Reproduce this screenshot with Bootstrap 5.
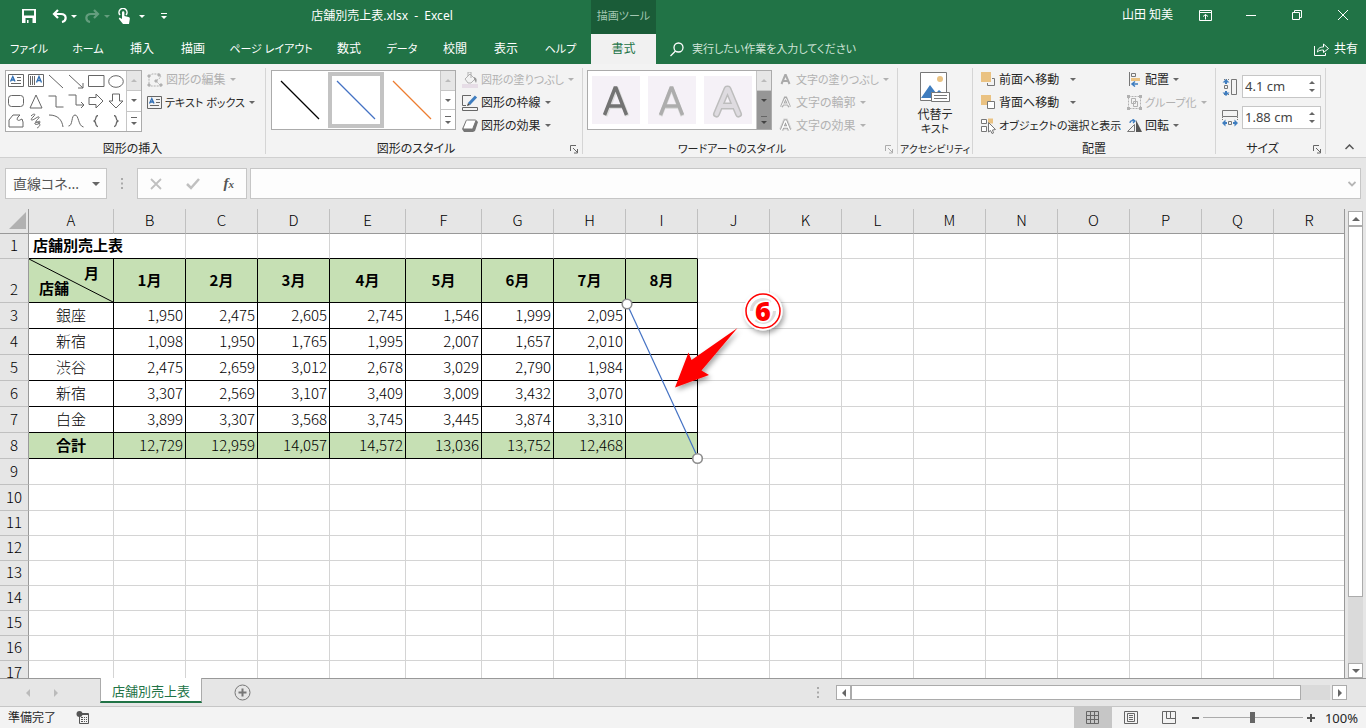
<!DOCTYPE html>
<html lang="ja">
<head>
<meta charset="utf-8">
<meta name="viewport" content="width=device-width, initial-scale=1">
<title>店舗別売上表.xlsx - Excel</title>
<link href="https://cdn.jsdelivr.net/npm/bootstrap@5.3.0/dist/css/bootstrap.min.css" rel="stylesheet">
<style>
:root{--xl:#217346;--line:#d4d4d4;--edge:#999;--chrome:#e6e6e6;--pane:#f3f3f3}
body{font-family:"Noto Sans","Noto Sans CJK JP",sans-serif;font-size:12px;line-height:16px;color:#262626;background:var(--chrome);font-feature-settings:"palt"}
button,input{font:inherit;font-feature-settings:inherit;color:inherit}
button{background:none;border:0;padding:0}
svg{display:block;flex:none}
svg.ic{fill:none;stroke:#666;stroke-width:1}
.kana{font-size:11px}
.kana-s{font-size:10px}
.tri{display:inline-block;width:0;height:0;border:3px solid transparent;border-top-color:#666;border-bottom:0;flex:none}
.tri.up{border:3px solid transparent;border-bottom-color:#666;border-top:0}
.tri.lt{border:4px solid transparent;border-right-color:#666;border-left:0}
.tri.rt{border:4px solid transparent;border-left-color:#666;border-right:0}
.tri.big{border-width:4px 4px 0}
.tri.up.big{border-width:0 4px 4px}
/* title and tabs */
.titlebar{height:34px;background:var(--xl);color:#fff}
.left-part{width:591px;height:32px}
.quick{width:173px;padding-left:22px}
.quick .tri{border-top-color:#fff;border-width:3px 3px 0}
.quick .faded{opacity:.3}
.tooltab{width:65px;background:#1a5c38;color:#a3c7b2;padding-bottom:2px}
.winbtns{height:30px}
.winbtn{width:46px;height:30px}
.winbtn svg{stroke:#fff}
.user{margin-right:9px}
.menu{height:30px;background:var(--xl);color:#fff}
.tabgrid{display:grid;grid-template-columns:58px 60px 48px 54px 102px 54px 52px 54px 48px 61px 65px}
.tabgrid a{color:#fff;text-decoration:none;line-height:30px;text-align:center;white-space:nowrap}
.tabgrid a.on{background:#f1f1f1;color:var(--xl)}
.askbox{margin-left:14px}
.ask{background:none;border:0;outline:0;width:220px;padding:0;color:#fff}
.ask::placeholder{color:#cfe3d7;opacity:1}
/* ribbon */
.ribbon{background:var(--pane);border-bottom:1px solid #d0d0d0;padding:4px 0 3px}
.grp{height:86px;border-right:1px solid #d5d5d5;display:flex;flex-direction:column;flex:none}
.grp-body{flex:1;display:flex;min-height:0}
.grp-label{height:12px;line-height:14px;text-align:center;position:relative;white-space:nowrap}
.launch{position:absolute;right:4px;top:3px}
.g1{width:266px}.g2{width:317px}.g3{width:315px}.g4{width:75px}.g5{width:243px}.g6{width:110px}
.gal{display:flex;margin:2px 6px 0 5px;background:#fff;border:1px solid #ababab;height:60px}
.gal.tall{height:62px;margin-right:5px}
.g3 .gal{margin-left:4px}
.shapes{display:grid;grid-template-columns:repeat(6,20px);grid-auto-rows:20px;width:120px}
.shapes button{display:grid;place-items:center}
.galbar{width:15px;display:flex;flex-direction:column;border-left:1px solid #c6c6c6}
.galbar button{flex:1;display:grid;place-items:center;border-bottom:1px solid #c6c6c6}
.galbar button:last-child{border:0}
.galbar button:first-child{background:#e6e6e6}
.galbar button:first-child .tri{border-bottom-color:#bbb}
.galbar.dark button+button{background:#969696;border:0}
.galbar.dark .tri{border-top-color:#444}
.more{border-top:1px solid #666;padding-top:3px;line-height:0}
.tile{width:56px;height:56px;display:grid;place-items:center;margin-top:1px}
.tile.sel{border:4px solid #c3c3c3}
.wa{width:48px;height:48px;background:#f5f1f7;margin:5px 4px}
.cmds{display:flex;flex-direction:column}
.cmds.wide{width:146px}
.cmds button{height:23px;display:flex;align-items:center;white-space:nowrap;gap:3px}
.cmds button .tri{margin-left:1px}
.off{color:#b1b1b1}
.off .tri{border-top-color:#b1b1b1}
.sizes{padding:7px 0 0 6px}
.spin{width:79px;height:23px;background:#fff;border:1px solid #c6c6c6;display:flex}
.spin input{border:0;outline:0;background:none;width:60px;padding:0 0 2px 2px;color:#444;font-size:13px}
.spin div{flex:1;display:grid;place-items:center;padding:2px 0}
.spin button{line-height:0;display:flex}
/* formula bar */
.fbar{padding:10px 5px}
.box31{height:31px;border:1px solid #c6c6c6;background:#fdfdfd;display:flex;align-items:center}
.namebox{width:102px}
.namebox input{border:0;outline:0;background:none;width:86px;padding:0 0 0 7px;font-size:14px;color:#555}
.grip{margin-left:14px}
.fbtns{width:110px;margin-left:13px;margin-right:3px;justify-content:space-around}
.fxbtn{font:italic bold 15px "Liberation Serif",serif;color:#555}
.fxbtn span{font-size:11px}
.fx-input{border:0;outline:0;background:none;flex:1;min-width:0}
/* sheet */
.work{min-height:0}
.sheetpane{overflow:hidden;border-right:1px solid var(--edge);background:#fff;font-feature-settings:normal}
.sheet{table-layout:fixed;border-collapse:separate;border-spacing:0;width:100%;font-size:15px;line-height:20px;color:#000;font-family:"Noto Sans CJK JP",sans-serif}
.sheet th,.sheet td{padding:0 2px 2px;height:25px;border:solid var(--line);border-width:0 1px 1px 0;white-space:nowrap}
.sheet thead th{background:var(--chrome);font-weight:300;text-align:center;border-right-color:#c0c0c0;border-bottom-color:var(--edge)}
.sheet thead th:first-child,.sheet tbody th:first-child{border-right-color:var(--edge)}
.sheet thead th:last-child,.sheet tbody td:last-child{border-right:0}
.sheet tbody th:first-child{background:var(--chrome);font-weight:300;text-align:center;vertical-align:bottom;border-bottom-color:#c0c0c0;padding:0 0 3px}
.sheet .h26>*{height:26px}
.sheet .h44>*{height:44px}
.sheet td.k{border-color:#000}
.sheet td.kb{border-bottom-color:#000}
.sheet .hd{background:#c6e0b4;font-weight:700;text-align:center}
.sheet .sum{background:#c6e0b4}
.sheet .n{text-align:right;font-weight:300}
.sheet .c{text-align:center;font-weight:300}
.diag{position:relative;line-height:15px}
.diag svg{position:absolute;inset:0;width:100%;height:100%}
.diag span{display:block;position:relative}
.anchor{position:relative}
.drawing{position:absolute;left:0;top:0;overflow:visible;z-index:2}
.vbar{width:21px;padding:2px 3px 0}
.sbtn{width:15px;height:15px;background:#fff;border:1px solid #ababab;display:grid;place-items:center;flex:none}
.track{background:#dadada;flex:1;display:flex;min-height:0}
.thumb{background:#fff;border:1px solid #ababab}
.vbar .thumb{width:100%;height:85%}
/* sheet tabs */
.sheetbar{height:29px;border-top:1px solid var(--edge);border-bottom:1px solid #c6c6c6}
.navs{width:100px;padding-left:26px;gap:24px}
.navs .tri.lt{border-right-color:#bbb}.navs .tri.rt{border-left-color:#bbb}
.stab{width:102px;height:25px;margin-top:-1px;background:#fff;border:1px solid #ababab;border-top:0;border-bottom:2px solid var(--xl);color:var(--xl);text-align:center;line-height:26px;font-size:13px;text-decoration:none}
.hbar{width:511px;padding-top:6px;margin-right:19px}
.hbar .track{height:15px;margin-right:2px}
.hbar .thumb{width:94%}
.status{height:21px;background:var(--pane)}
.vbtn{width:38px;height:21px;display:grid;place-items:center}
.vbtn.on{background:#c6c6c6}
.pct{font-size:13px;padding:0 8px 0 10px}
.zoomer{appearance:none;-webkit-appearance:none;width:100px;height:13px;background:linear-gradient(#ababab,#ababab) center/100% 1px no-repeat;margin:0 4px}
.zoomer::-webkit-slider-thumb{-webkit-appearance:none;width:5px;height:11px;background:#666}
</style>
</head>
<body class="vh-100 d-flex flex-column overflow-hidden">
<header>
<div class="titlebar d-flex">
 <div class="left-part d-flex align-items-center">
  <div class="quick d-flex align-items-center">
   <button aria-label="上書き保存"><svg width="14" height="14" fill="#fff"><path fill-rule="evenodd" d="M0 0h14v14H0zM2 1.500v5h10v-5zM3.500 9v5h1.500v-3h1.500v3h4V9z"/></svg></button>
   <button class="ms-3" aria-label="元に戻す"><svg width="15" height="14" fill="none" stroke="#fff" stroke-width="2.200"><path d="M6 1 2 5l4 4M2 5h7c6 0 6 7 1 8"/></svg></button>
   <i class="tri ms-1"></i>
   <button class="faded ms-2" aria-label="やり直し"><svg width="15" height="14" fill="none" stroke="#fff" stroke-width="2.200"><path d="M9 1l4 4-4 4M13 5H6C0 5 0 12 5 13"/></svg></button>
   <i class="tri faded ms-1"></i>
   <button class="ms-2" aria-label="タッチ/マウス モードの切り替え"><svg width="13" height="16"><path d="M2 7a4 4 0 1 1 6 0" fill="none" stroke="#fff" stroke-width="1.500"/><path fill="#fff" d="M4 4.500a1.200 1.200 0 0 1 2.400 0V8l4 1c1.200.3 1.600 1 1.400 2l-.8 5H5L1 11c-.5-1 .5-1.700 1.400-1L4 11z"/></svg></button>
   <i class="tri ms-2"></i>
   <button class="ms-3" aria-label="クイック アクセス ツール バーのユーザー設定"><svg width="7" height="7" fill="#fff"><path d="M0 0h6v1H0zM0 3h6L3 6z"/></svg></button>
  </div>
  <div class="flex-fill text-center text-nowrap">店舗別売上表.xlsx&nbsp; -&nbsp; Excel</div>
 </div>
 <div class="tooltab d-flex align-items-center justify-content-center text-nowrap kana">描画ツール</div>
 <div class="winbtns ms-auto d-flex align-items-center">
  <span class="user">山田 知美</span>
  <button class="winbtn" aria-label="リボンの表示オプション"><svg class="m-auto" width="13" height="11" fill="none"><path d="M.5.500h12v10H.5zM.5 2.500h12M6.500 9.500V4.500M4 6.500l2.500-2 2.500 2"/></svg></button>
  <button class="winbtn" aria-label="最小化"><svg class="m-auto" width="10" height="10"><path d="M0 5.500h10"/></svg></button>
  <button class="winbtn" aria-label="元に戻す(縮小)"><svg class="m-auto" width="10" height="10" fill="none"><path d="M.5 2.500h7v7h-7zM2.500 2V.5h7v7H8"/></svg></button>
  <button class="winbtn" aria-label="閉じる"><svg class="m-auto" width="10" height="10"><path d="m0 0 10 10M10 0 0 10"/></svg></button>
 </div>
</div>
<div class="menu d-flex align-items-stretch">
 <nav class="tabgrid">
  <a href="#" class="kana">ファイル</a><a href="#" class="kana">ホーム</a><a href="#">挿入</a><a href="#">描画</a><a href="#" class="kana">ページ レイアウト</a><a href="#">数式</a><a href="#" class="kana">データ</a><a href="#">校閲</a><a href="#">表示</a><a href="#" class="kana">ヘルプ</a><a href="#" class="on">書式</a>
 </nav>
 <label class="askbox d-flex align-items-center gap-2">
  <svg width="14" height="15" fill="none" stroke="#fff" stroke-width="1.300"><circle cx="8.500" cy="5.500" r="4.500"/><path d="M5.500 9 .5 14"/></svg>
  <input class="ask kana" aria-label="操作アシスト" placeholder="実行したい作業を入力してください">
 </label>
 <button class="ms-auto d-flex align-items-center gap-1 pe-2"><svg width="17" height="15" fill="none" stroke="#fff"><path d="M1.500 4v9.500h11V11M4.500 10c0-4 3-5 6-5V2l5 4.500-5 4V8c-3 0-4.500.5-6 2z"/></svg><span>共有</span></button>
</div>
</header>

<section class="ribbon d-flex" aria-label="書式">
 <div class="grp g1"><div class="grp-body">
  <div class="gal tall">
   <div class="shapes">
    <button aria-label="テキスト ボックス"><svg class="ic" width="16" height="14"><path d="M.5.500h15v12H.5zM9 3.500h4M9 6.500h4M3 9.500h10"/><path stroke="#2e6db4" stroke-width="1.300" d="m2.500 7.500 2.300-5 2.200 5M3.500 6h3"/></svg></button>
    <button aria-label="縦書き"><svg class="ic" width="16" height="14"><path d="M.5.500h15v12H.5zM2.500 2v9M4.500 2v9M6.500 2v9"/><path stroke="#2e6db4" stroke-width="1.300" d="m8.500 8.500 2.500-6 2.500 6M9.500 6.500h3"/></svg></button>
    <button aria-label="直線"><svg class="ic" width="16" height="16"><path d="m1 2 14 13"/></svg></button>
    <button aria-label="矢印"><svg class="ic" width="16" height="16"><path d="m1 2 14 13M15 10v5h-5"/></svg></button>
    <button aria-label="四角形"><svg class="ic" width="17" height="13"><path d="M.5.500h15.500v11H.5z"/></svg></button>
    <button aria-label="楕円"><svg class="ic" width="16" height="13"><ellipse cx="8" cy="6.500" rx="7.300" ry="5.800"/></svg></button>
    <button aria-label="角丸四角形"><svg class="ic" width="16" height="13"><rect x=".5" y=".5" width="15" height="11" rx="3"/></svg></button>
    <button aria-label="三角形"><svg class="ic" width="14" height="15"><path d="m7 1 6 13H1z"/></svg></button>
    <button aria-label="コネクタ"><svg class="ic" width="16" height="13"><path d="M.5 1H8v11h7.500"/></svg></button>
    <button aria-label="矢印コネクタ"><svg class="ic" width="17" height="15"><path d="M.5 1H8v10h7.500M13 8l3 3-3 3"/></svg></button>
    <button aria-label="右矢印"><svg class="ic" width="16" height="16"><path d="M1 4.500h7V1l7 7-7 7v-3.500H1z"/></svg></button>
    <button aria-label="下矢印"><svg class="ic" width="16" height="16"><path d="M4.500 1v7H1l7 7 7-7h-3.500V1z"/></svg></button>
    <button aria-label="フリーフォーム"><svg class="ic" width="16" height="14"><path d="M1 13V6l4-5h7l-2 2c-2 3 0 4 2 3l2-1 1 3v5z"/></svg></button>
    <button aria-label="曲線"><svg class="ic" width="14" height="16"><path d="M2 3c3-3 5-2 3 0s-4 4-2 4 6-4 7-3-4 4-3 5 4-2 4 0-4 3-5 2 2-3 4-1 0 4-2 5"/></svg></button>
    <button aria-label="円弧"><svg class="ic" width="16" height="14"><path d="M1 1c9 0 13 5 14 12"/></svg></button>
    <button aria-label="自由曲線"><svg class="ic" width="16" height="14"><path d="M.5 12C5 12 3 1 7 1s3 11 8.500 12"/></svg></button>
    <button aria-label="左中かっこ"><svg class="ic" width="8" height="13"><path d="M6 .5C2.500.5 5 6 1.500 6 5 6 2.500 11.500 6 11.500" stroke-width="1.300"/></svg></button>
    <button aria-label="右中かっこ"><svg class="ic" width="8" height="13"><path d="M2 .5c3.500 0 1 5.500 4.500 5.500C3 6 5.500 11.500 2 11.500" stroke-width="1.300"/></svg></button>
   </div>
   <div class="galbar"><button aria-label="上"><i class="tri up"></i></button><button aria-label="下"><i class="tri"></i></button><button aria-label="その他"><span class="more"><i class="tri"></i></span></button></div>
  </div>
  <div class="cmds">
   <button class="off"><svg class="ic" width="16" height="14" style="stroke:#b1b1b1"><path stroke-dasharray="2 1" d="M2 3 5 1h7l2 3-5 4 5 5H2z"/><path fill="#b1b1b1" d="M1 2h2v2H1zM11 1h2v2h-2zM1 11h2v2H1zM13 11h2v2h-2zM8 7h2v2H8z"/></svg>図形の編集<i class="tri"></i></button>
   <button class="kana"><svg class="ic" width="15" height="13"><path d="M.5.500h14v12H.5zM9 3.500h4M9 6.500h4M3 9.500h9"/><path stroke="#2e6db4" stroke-width="1.300" d="m2.500 7.500 2.300-5 2.200 5M3.500 6h3"/></svg>テキスト ボックス<i class="tri"></i></button>
  </div>
 </div><div class="grp-label">図形の挿入</div></div>

 <div class="grp g2"><div class="grp-body">
  <div class="gal">
   <button class="tile" aria-label="黒の線"><svg width="40" height="40"><path d="m1 1 38 38" stroke="#000" stroke-width="1.300"/></svg></button>
   <button class="tile sel" aria-label="青の線"><svg width="40" height="40"><path d="m1 1 38 38" stroke="#4472c4" stroke-width="1.300"/></svg></button>
   <button class="tile" aria-label="オレンジの線"><svg width="40" height="40"><path d="m1 1 38 38" stroke="#ed7d31" stroke-width="1.300"/></svg></button>
   <div class="galbar"><button aria-label="上"><i class="tri up"></i></button><button aria-label="下"><i class="tri"></i></button><button aria-label="その他"><span class="more"><i class="tri"></i></span></button></div>
  </div>
  <div class="cmds">
   <button class="off kana"><svg width="16" height="16"><path fill="#e6dde6" d="M0 12h16v4H0z"/><path d="m3 7 5-5 5 5-4 4H6zM6 4V0h3v6" fill="none" stroke="#b1b1b1"/><path d="M12 5c3 1 3 3 2 6l-2-4z" fill="#999"/></svg>図形の塗りつぶし<i class="tri"></i></button>
   <button><svg width="16" height="16" fill="none"><path d="M9 .5H.5v10H4M.5 12.500h15v3H.5z" stroke="#666"/><path d="m7 9 7-7.500" stroke="#3f7dbf" stroke-width="3"/><path d="m5 11 1-3 2 2z" fill="#444"/></svg>図形の枠線<i class="tri"></i></button>
   <button><svg width="16" height="16"><path d="M5 2h9l2 2-3 9-2 1H2l-2-3z" fill="#777"/><path d="M5.500 2H13c1 0 1 .5.800 1L11 10c-.3 1-.8 1-1.500 1H2.500c-1 0-1.500-.7-1.300-1.200L4 3c.2-.7.500-1 1.500-1z" fill="#fff" stroke="#777"/></svg>図形の効果<i class="tri"></i></button>
  </div>
 </div><div class="grp-label pe-3">図形のスタイル<button class="launch" aria-label="図形の書式設定"><svg class="ic" width="8" height="9"><path d="M.5 6V.5H6M3 3l4 4M7.500 4v4H4"/></svg></button></div></div>

 <div class="grp g3"><div class="grp-body">
  <div class="gal">
   <button class="wa" aria-label="塗りつぶし 濃い灰色"><svg width="48" height="48"><path d="m12.500 39 10.500-27h1L34.500 39M17 30h13.500" transform="translate(1 1)" fill="none" stroke="#ddd" stroke-width="4"/><path d="m12.500 39 10.500-27h1L34.500 39M17 30h13.500" fill="none" stroke="#737373" stroke-width="3.500"/></svg></button>
   <button class="wa ms-1" aria-label="塗りつぶし 灰色"><svg width="48" height="48"><path d="m12.500 39 10.500-27h1L34.500 39M17 30h13.500" transform="translate(0 1)" fill="none" stroke="#ddd" stroke-width="4"/><path d="m12.500 39 10.500-27h1L34.500 39M17 30h13.500" fill="none" stroke="#adadad" stroke-width="3.500"/></svg></button>
   <button class="wa ms-1" aria-label="塗りつぶし 白"><svg width="48" height="48" stroke-linejoin="round" stroke-linecap="round" fill="none"><path d="m12.500 38 10.500-25h1L34.500 38M17 30h13.500" stroke="#bdbdbd" stroke-width="7"/><path d="m12.500 38 10.500-25h1L34.500 38M17 30h13.500" stroke="#dedbe0" stroke-width="4"/></svg></button>
   <div class="galbar dark"><button aria-label="上"><i class="tri up"></i></button><button aria-label="下"><i class="tri"></i></button><button aria-label="その他"><span class="more"><i class="tri"></i></span></button></div>
  </div>
  <div class="cmds off">
   <button class="kana"><svg width="15" height="14" fill="none" stroke="#aaa" stroke-width="2"><path d="m3.500 11 3.700-9h.600l3.700 9M5 8h5"/></svg>文字の塗りつぶし<i class="tri"></i></button>
   <button><svg width="15" height="14" fill="none"><path d="m3.500 11 3.700-9h.600l3.700 9M5 8h5" stroke="#aaa" stroke-width="3"/><path d="m3.500 10.500 3.700-8h.600l3.700 8M5 8h5" stroke="#fff"/></svg>文字の輪郭<i class="tri"></i></button>
   <button><svg width="15" height="16" fill="none"><path d="m3.500 12 3.700-9h.600l3.700 9M5 9h5" stroke="#d6d6d6" stroke-width="5"/><path d="m3.500 12 3.700-9h.600l3.700 9M5 9h5" stroke="#999" stroke-width="3"/><path d="m3.500 12 3.700-9h.600l3.700 9M5 9h5" stroke="#fff" stroke-width="1.500"/></svg>文字の効果<i class="tri"></i></button>
  </div>
 </div><div class="grp-label kana pe-3">ワードアートのスタイル<button class="launch opacity-50" aria-label="文字の効果の設定"><svg class="ic" width="8" height="9"><path d="M.5 6V.5H6M3 3l4 4M7.500 4v4H4"/></svg></button></div></div>

 <div class="grp g4"><div class="grp-body justify-content-center">
  <button class="d-flex flex-column align-items-center lh-sm"><svg class="mt-1 mb-1" width="32" height="31"><path d="M1.500.500h26v28h-26z" fill="#fff" stroke="#777"/><circle cx="21" cy="7" r="3" fill="#eac282"/><path d="m2 26 9-13 6 8 3-3 8 7v1z" fill="#3f7dbf"/><path d="M12.500 20.500h18v9h-18z" fill="#fff" stroke="#777"/><path d="M15 23.500h13M15 26.500h13" stroke="#777"/></svg><span>代替テ</span><span class="kana">キスト</span></button>
 </div><div class="grp-label kana-s">アクセシビリティ</div></div>

 <div class="grp g5"><div class="grp-body ps-2">
  <div class="cmds wide">
   <button><svg width="15" height="15"><path d="M0 0h10v10H0z" fill="#eac282"/><path d="M11 6.500h2.500v7h-7V11" fill="none" stroke="#777"/></svg>前面へ移動<i class="tri ms-2"></i></button>
   <button><svg width="15" height="15"><path d="M0 0h10v10H0z" fill="#eac282"/><path d="M6.500 6.500h7v7h-7z" fill="#fff" stroke="#777"/></svg>背面へ移動<i class="tri ms-2"></i></button>
   <button class="kana"><svg width="15" height="16" fill="none" stroke="#777"><path d="M7 .500h5v5H7z" fill="#eac282" stroke="none"/><path d="M.5 1.500h5v4h-5zM.5 8.500h5v5h-5z" fill="#fff"/><path d="m7.500 4.500 7 7-3 .5 1 3-1.500.5-1.500-3-2 1.500z" fill="#fff"/></svg>オブジェクトの選択と表示</button>
  </div>
  <div class="cmds">
   <button><svg width="15" height="15" fill="none"><path d="M2.500 0v14" stroke="#777"/><path d="M4.500 1.500h4v3h-4z" stroke="#777"/><path d="M4 6h9v3H4z" fill="#eac282"/><path d="M11 12H5m3-2.500L5 12l3 2.500" stroke="#3f7dbf" stroke-width="1.500"/></svg>配置<i class="tri"></i></button>
   <button class="off kana"><svg width="15" height="15" fill="none" stroke="#b1b1b1"><path stroke-dasharray="2 1" d="M1.500 1.500h12v12h-12z"/><path d="M4.500 3.500h4v5h-4zM6.500 6.500h4v5h-4z"/><path fill="#b1b1b1" stroke="none" d="M0 0h3v3H0zM12 0h3v3h-3zM0 12h3v3H0zM12 12h3v3h-3z"/></svg>グループ化<i class="tri"></i></button>
   <button><svg width="15" height="14" fill="none"><path d="M.5 12.500h7v-7z" stroke="#777"/><path d="M9 1v12h6z" fill="#555"/><path d="M3 4c0-2 2-3 4-2M5.500 0 8 2 6 4" stroke="#3f7dbf" stroke-width="1.300"/></svg>回転<i class="tri"></i></button>
  </div>
 </div><div class="grp-label">配置</div></div>

 <div class="grp g6"><div class="grp-body sizes flex-column gap-2">
  <div class="d-flex align-items-center gap-1"><svg width="16" height="18" fill="none"><path d="M9.500 1.500h5v15h-5z" stroke="#777"/><path d="M2 1.500h6M2 16.500h6" stroke="#777" stroke-dasharray="1 1"/><path d="M2.500 7.500h3v3h-3z" stroke="#777"/><path d="M4 1 .5 4.500H3V6h2V4.500h2.500zM4 18 .5 14.500H3V13h2v1.500h2.500z" fill="#3f7dbf"/></svg><div class="spin"><input aria-label="図形の高さ" value="4.1 cm"><div><button aria-label="高さを増やす"><i class="tri up"></i></button><button aria-label="高さを減らす"><i class="tri"></i></button></div></div></div>
  <div class="d-flex align-items-center gap-1"><svg width="16" height="18" fill="none"><path d="M.5 1.500h15v6H.5z" stroke="#777"/><path d="M.5 8v4M15.500 8v4" stroke="#777" stroke-dasharray="1 1"/><path d="M6.500 12.500h3v3h-3z" stroke="#777"/><path d="m0 14 3.500-3.500V13H5v2H3.500v2.500zM16 14l-3.500-3.500V13H11v2h1.500v2.500z" fill="#3f7dbf"/></svg><div class="spin"><input aria-label="図形の幅" value="1.88 cm"><div><button aria-label="幅を増やす"><i class="tri up"></i></button><button aria-label="幅を減らす"><i class="tri"></i></button></div></div></div>
 </div><div class="grp-label pe-3">サイズ<button class="launch" aria-label="サイズとプロパティ"><svg class="ic" width="8" height="9"><path d="M.5 6V.5H6M3 3l4 4M7.500 4v4H4"/></svg></button></div></div>
 <button class="ms-auto align-self-end pe-2 me-1 pb-1" aria-label="リボンを折りたたむ"><svg width="9" height="6" fill="none" stroke="#555" stroke-width="1.500"><path d="m.5 5 4-4 4 4"/></svg></button>
</section>

<section class="fbar d-flex align-items-center">
 <div class="box31 namebox"><input aria-label="名前ボックス" value="直線コネ..."><button aria-label="名前の一覧"><i class="tri big d-block"></i></button></div>
 <svg class="grip" width="3" height="12" fill="#aaa"><path d="M0 0h2v2H0zM0 4.500h2v2H0zM0 9h2v2H0z"/></svg>
 <div class="box31 fbtns">
  <button aria-label="キャンセル"><svg width="12" height="12" stroke="#c0c0c0" stroke-width="1.800"><path d="m1 1 10 10M11 1 1 11"/></svg></button>
  <button aria-label="入力"><svg width="14" height="12" fill="none" stroke="#c0c0c0" stroke-width="2.500"><path d="m1 6 4 4 8-9"/></svg></button>
  <button class="fxbtn" aria-label="関数の挿入">f<span>x</span></button>
 </div>
 <div class="box31 flex-fill"><input class="fx-input" aria-label="数式バー"><svg class="me-1" width="8" height="6" fill="none" stroke="#b5b5b5" stroke-width="1.800"><path d="m.5 1 3.500 3.500L7.500 1"/></svg></div>
</section>

<main class="work d-flex flex-fill">
<div class="sheetpane flex-fill">
<table class="sheet">
<colgroup><col style="width:29px"><col style="width:85px"><col style="width:72px"><col style="width:72px"><col style="width:72px"><col style="width:76px"><col style="width:76px"><col style="width:72px"><col style="width:72px"><col style="width:72px"><col style="width:72px"><col style="width:72px"><col style="width:72px"><col style="width:72px"><col style="width:72px"><col style="width:72px"><col style="width:72px"><col style="width:72px"><col></colgroup>
<thead><tr><th aria-label="すべて選択"><svg class="ms-auto" width="17" height="17"><path d="M17 0v17H0z" fill="#b1b1b1"/></svg></th><th>A</th><th>B</th><th>C</th><th>D</th><th>E</th><th>F</th><th>G</th><th>H</th><th>I</th><th>J</th><th>K</th><th>L</th><th>M</th><th>N</th><th>O</th><th>P</th><th>Q</th><th>R</th></tr></thead>
<tbody>
<tr><th>1</th><td class="kb fw-bold ps-1" colspan="2">店舗別売上表</td><td class="kb"></td><td class="kb"></td><td class="kb"></td><td class="kb"></td><td class="kb"></td><td class="kb"></td><td class="kb"></td><td></td><td></td><td></td><td></td><td></td><td></td><td></td><td></td><td></td></tr>
<tr class="h44"><th>2</th><td class="k hd diag"><svg viewBox="0 0 84 43" preserveAspectRatio="none"><path d="m0 0 84 43" stroke="#000"/></svg><span class="text-end pe-2 me-1">月</span><span class="text-start ps-2">店舗</span></td><td class="k hd">1月</td><td class="k hd">2月</td><td class="k hd">3月</td><td class="k hd">4月</td><td class="k hd">5月</td><td class="k hd">6月</td><td class="k hd">7月</td><td class="k hd">8月</td><td></td><td></td><td></td><td></td><td></td><td></td><td></td><td></td><td></td></tr>
<tr class="h26"><th>3</th><td class="k c">銀座</td><td class="k n">1,950</td><td class="k n">2,475</td><td class="k n">2,605</td><td class="k n">2,745</td><td class="k n">1,546</td><td class="k n">1,999</td><td class="k n">2,095</td><td class="k anchor">
<svg class="drawing" width="160" height="160">
 <defs><filter id="sh" x="-30%" y="-30%" width="170%" height="170%"><feDropShadow dx="2" dy="3" stdDeviation="2.500" flood-opacity=".35"/></filter></defs>
 <path d="m1 1 71 154" stroke="#4472c4" stroke-width="1.200"/>
 <circle cx="1" cy="1" r="4.800" fill="#fff" stroke="#8c8c8c" stroke-width="1.600"/><circle cx="71.500" cy="155.500" r="4.800" fill="#fff" stroke="#8c8c8c" stroke-width="1.600"/>
 <path filter="url(#sh)" fill="#f00" d="m111.500 25-46 32-3-7.500-13.500 35 34-12.500-7.500-4.500z"/>
 <circle cx="137" cy="8" r="19.500" fill="#fff" filter="url(#sh)"/><circle cx="137" cy="8" r="17" fill="#fff" stroke="#f00" stroke-width="1.500"/>
 <circle cx="137" cy="8" r="11.500" fill="none" stroke="#ddd" stroke-width="3" stroke-dasharray="26 10"/>
 <text x="137" y="18" text-anchor="middle" font-family="Open Sans" font-weight="800" font-size="27" fill="#f00" stroke="#fff" stroke-width="3" paint-order="stroke">6</text>
</svg></td><td></td><td></td><td></td><td></td><td></td><td></td><td></td><td></td><td></td></tr>
<tr class="h26"><th>4</th><td class="k c">新宿</td><td class="k n">1,098</td><td class="k n">1,950</td><td class="k n">1,765</td><td class="k n">1,995</td><td class="k n">2,007</td><td class="k n">1,657</td><td class="k n">2,010</td><td class="k"></td><td></td><td></td><td></td><td></td><td></td><td></td><td></td><td></td><td></td></tr>
<tr class="h26"><th>5</th><td class="k c">渋谷</td><td class="k n">2,475</td><td class="k n">2,659</td><td class="k n">3,012</td><td class="k n">2,678</td><td class="k n">3,029</td><td class="k n">2,790</td><td class="k n">1,984</td><td class="k"></td><td></td><td></td><td></td><td></td><td></td><td></td><td></td><td></td><td></td></tr>
<tr class="h26"><th>6</th><td class="k c">新宿</td><td class="k n">3,307</td><td class="k n">2,569</td><td class="k n">3,107</td><td class="k n">3,409</td><td class="k n">3,009</td><td class="k n">3,432</td><td class="k n">3,070</td><td class="k"></td><td></td><td></td><td></td><td></td><td></td><td></td><td></td><td></td><td></td></tr>
<tr class="h26"><th>7</th><td class="k c">白金</td><td class="k n">3,899</td><td class="k n">3,307</td><td class="k n">3,568</td><td class="k n">3,745</td><td class="k n">3,445</td><td class="k n">3,874</td><td class="k n">3,310</td><td class="k"></td><td></td><td></td><td></td><td></td><td></td><td></td><td></td><td></td><td></td></tr>
<tr class="h26"><th>8</th><td class="k hd">合計</td><td class="k n sum">12,729</td><td class="k n sum">12,959</td><td class="k n sum">14,057</td><td class="k n sum">14,572</td><td class="k n sum">13,036</td><td class="k n sum">13,752</td><td class="k n sum">12,468</td><td class="k sum"></td><td></td><td></td><td></td><td></td><td></td><td></td><td></td><td></td><td></td></tr>
<tr class="h26"><th>9</th><td></td><td></td><td></td><td></td><td></td><td></td><td></td><td></td><td></td><td></td><td></td><td></td><td></td><td></td><td></td><td></td><td></td><td></td></tr>
<tr class="h26"><th>10</th><td></td><td></td><td></td><td></td><td></td><td></td><td></td><td></td><td></td><td></td><td></td><td></td><td></td><td></td><td></td><td></td><td></td><td></td></tr>
<tr><th>11</th><td></td><td></td><td></td><td></td><td></td><td></td><td></td><td></td><td></td><td></td><td></td><td></td><td></td><td></td><td></td><td></td><td></td><td></td></tr>
<tr><th>12</th><td></td><td></td><td></td><td></td><td></td><td></td><td></td><td></td><td></td><td></td><td></td><td></td><td></td><td></td><td></td><td></td><td></td><td></td></tr>
<tr><th>13</th><td></td><td></td><td></td><td></td><td></td><td></td><td></td><td></td><td></td><td></td><td></td><td></td><td></td><td></td><td></td><td></td><td></td><td></td></tr>
<tr><th>14</th><td></td><td></td><td></td><td></td><td></td><td></td><td></td><td></td><td></td><td></td><td></td><td></td><td></td><td></td><td></td><td></td><td></td><td></td></tr>
<tr><th>15</th><td></td><td></td><td></td><td></td><td></td><td></td><td></td><td></td><td></td><td></td><td></td><td></td><td></td><td></td><td></td><td></td><td></td><td></td></tr>
<tr><th>16</th><td></td><td></td><td></td><td></td><td></td><td></td><td></td><td></td><td></td><td></td><td></td><td></td><td></td><td></td><td></td><td></td><td></td><td></td></tr>
<tr><th>17</th><td></td><td></td><td></td><td></td><td></td><td></td><td></td><td></td><td></td><td></td><td></td><td></td><td></td><td></td><td></td><td></td><td></td><td></td></tr>
</tbody>
</table>
</div>
<div class="vbar d-flex flex-column flex-shrink-0">
 <button class="sbtn" aria-label="上へスクロール"><i class="tri up big"></i></button>
 <div class="track"><div class="thumb"></div></div>
 <button class="sbtn" aria-label="下へスクロール"><i class="tri big"></i></button>
</div>
</main>

<footer>
<div class="sheetbar d-flex">
 <div class="navs d-flex align-items-center"><i class="tri lt"></i><i class="tri rt"></i></div>
 <a href="#" class="stab">店舗別売上表</a>
 <button class="ms-4 ps-2" aria-label="新しいシート"><svg width="17" height="17" fill="none" stroke="#777"><circle cx="8.500" cy="8.500" r="7.500"/><path d="M8.500 4.500v8M4.500 8.500h8" stroke-width="2"/></svg></button>
 <svg class="grip ms-auto me-3 align-self-center" width="3" height="12" fill="#aaa"><path d="M0 0h2v2H0zM0 4.500h2v2H0zM0 9h2v2H0z"/></svg>
 <div class="hbar d-flex"><button class="sbtn" aria-label="左へスクロール"><i class="tri lt"></i></button><div class="track"><div class="thumb"></div></div><button class="sbtn" aria-label="右へスクロール"><i class="tri rt"></i></button></div>
</div>
<div class="status d-flex align-items-center ps-2">
 <span>準備完了</span>
 <svg class="ms-3 ps-1" width="20" height="14" fill="none" stroke="#555"><path d="M3.500 5v7.500h9v-10H6"/><path d="M6 3.500h6M5 6.500h2M8 6.500h1M10 6.500h1M5 8.500h2M8 8.500h1M10 8.500h1M5 10.500h2M8 10.500h1M10 10.500h1"/><circle cx="3.500" cy="3" r="3" fill="#555" stroke="none"/></svg>
 <div class="ms-auto d-flex align-items-center">
  <button class="vbtn on" aria-label="標準"><svg class="ic" width="13" height="13"><path d="M.5.500h12v12H.5zM.5 4.500h12M.5 8.500h12M4.500.500v12M8.500.500v12"/></svg></button>
  <button class="vbtn" aria-label="ページ レイアウト"><svg class="ic" width="14" height="13"><path d="M.5.500h13v12H.5zM3.500 2.500h7v8h-7zM5 4.500h4M5 6.500h4M5 8.500h4"/></svg></button>
  <button class="vbtn" aria-label="改ページ プレビュー"><svg class="ic" width="14" height="13"><path d="M.5.500h13v12H.5zM4.500.500v7h4v-7M8.500 7.500h5"/></svg></button>
  <button class="ms-1" aria-label="縮小"><svg width="7" height="8"><path d="M0 4h7" stroke="#555" stroke-width="2"/></svg></button>
  <input type="range" class="zoomer" aria-label="ズーム" min="0" max="100" value="50">
  <button aria-label="拡大"><svg width="8" height="8"><path d="M0 4h8M4 0v8" stroke="#555" stroke-width="2"/></svg></button>
  <span class="pct">100%</span>
 </div>
</div>
</footer>
<script src="https://cdn.jsdelivr.net/npm/bootstrap@5.3.0/dist/js/bootstrap.bundle.min.js"></script>
</body>
</html>
